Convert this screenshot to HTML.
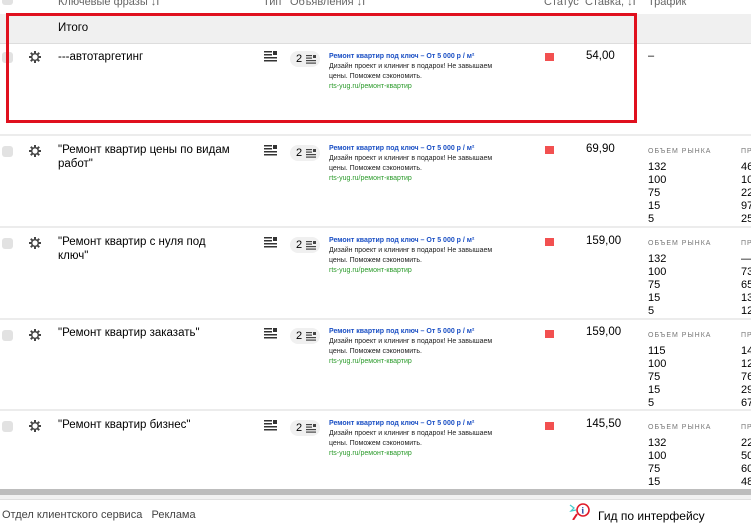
<!DOCTYPE html>
<html><head><meta charset="utf-8"><style>
*{margin:0;padding:0;box-sizing:border-box}
body{width:751px;height:519px;overflow:hidden;background:#fff;font-family:"Liberation Sans","DejaVu Sans",sans-serif;color:#000;position:relative}
.a{position:absolute;white-space:nowrap}
.hd{font-size:11px;color:#666;top:-4px}
.line{position:absolute;left:0;width:751px;height:2px;background:#ececec}
.cb{position:absolute;left:2px;width:11px;height:11px;border-radius:3px;background:#e2e2e2}
.gear{position:absolute;left:28px;width:14px;height:14px}
.ph{position:absolute;left:58px;font-size:11.5px;line-height:14px;width:180px;white-space:normal}
.ti{position:absolute;left:264px;width:13px;height:11px}
.bd{position:absolute;left:290px;width:30px;height:16px;border-radius:8px;background:#f0f0f0;font-size:11px;line-height:16px;padding-left:6px}
.bd svg{position:absolute;left:16px;top:4px}
.ad{position:absolute;left:329px;font-size:7px;line-height:10px;width:182px;white-space:normal;color:#222}
.ad b{color:#1a4fc4;font-weight:bold;display:block;white-space:nowrap}
.ad i{font-style:normal;color:#2a9a2a;display:block}
.st{position:absolute;left:545px;width:9px;height:8px;background:#f25050}
.bid{position:absolute;left:586px;font-size:11.5px}
.tr{position:absolute;left:648px;font-size:11px;line-height:13px}
.tr .h{font-size:7px;letter-spacing:1px;color:#777;margin-bottom:5px;line-height:9px}
.tr2{position:absolute;left:741px;font-size:11px;line-height:13px}
.tr2 .h{font-size:7px;letter-spacing:1px;color:#777;margin-bottom:5px;line-height:9px}
</style></head><body>
<div class="cb" style="top:-6px"></div>
<div class="a hd" style="left:58px">Ключевые фразы ↓I</div>
<div class="a hd" style="left:263px">Тип</div>
<div class="a hd" style="left:290px">Объявления ↓I</div>
<div class="a hd" style="left:544px">Статус</div>
<div class="a hd" style="left:585px">Ставка, ↓I</div>
<div class="a hd" style="left:648px">Трафик</div>

<div style="position:absolute;left:0;top:14px;width:751px;height:30px;background:#f0f0f0;border-bottom:1px solid #ddd"></div>
<div class="a" style="left:58px;top:22px;font-size:11.5px">Итого</div>

<svg width="0" height="0" style="position:absolute"><defs>
<g id="g"><g stroke="#444" stroke-width="2"><line x1="7" y1="1" x2="7" y2="13"/><line x1="1" y1="7" x2="13" y2="7"/><line x1="2.8" y1="2.8" x2="11.2" y2="11.2"/><line x1="11.2" y1="2.8" x2="2.8" y2="11.2"/></g><circle cx="7" cy="7" r="4" fill="#444"/><circle cx="7" cy="7" r="2.6" fill="#fff"/></g>
<g id="t" fill="#333"><rect x="0" y="0" width="8" height="1.5"/><rect x="9" y="0" width="4" height="4"/><rect x="0" y="3" width="8" height="1.5"/><rect x="0" y="6" width="13" height="1.5"/><rect x="0" y="9" width="13" height="1.5"/></g>
<g id="s" fill="#444"><rect x="0" y="0" width="6" height="1.2"/><rect x="7" y="0" width="3" height="3"/><rect x="0" y="2.5" width="6" height="1.2"/><rect x="0" y="5" width="10" height="1.2"/><rect x="0" y="7.5" width="10" height="1.2"/></g>
</defs></svg>

<!-- row 1 -->
<div class="cb" style="top:52px"></div>
<svg class="gear" style="top:50px" viewBox="0 0 14 14"><use href="#g"/></svg>
<div class="ph" style="top:50px">---автотаргетинг</div>
<svg class="ti" style="top:51px" viewBox="0 0 13 11"><use href="#t"/></svg>
<div class="bd" style="top:51px">2<svg width="10" height="9"><use href="#s"/></svg></div>
<div class="ad" style="top:52px"><b>Ремонт квартир под ключ – От 5 000 р / м²</b>Дизайн проект и клининг в подарок! Не завышаем цены. Поможем сэкономить.<i>rts-yug.ru/ремонт-квартир</i></div>
<div class="st" style="top:53px"></div>
<div class="bid" style="top:50px">54,00</div>
<div class="a" style="left:648px;top:50px;font-size:11px">–</div>
<div class="line" style="top:134px"></div>

<!-- row 2 -->
<div class="cb" style="top:146px"></div>
<svg class="gear" style="top:144px" viewBox="0 0 14 14"><use href="#g"/></svg>
<div class="ph" style="top:143px">"Ремонт квартир цены по видам работ"</div>
<svg class="ti" style="top:145px" viewBox="0 0 13 11"><use href="#t"/></svg>
<div class="bd" style="top:145px">2<svg width="10" height="9"><use href="#s"/></svg></div>
<div class="ad" style="top:144px"><b>Ремонт квартир под ключ – От 5 000 р / м²</b>Дизайн проект и клининг в подарок! Не завышаем цены. Поможем сэкономить.<i>rts-yug.ru/ремонт-квартир</i></div>
<div class="st" style="top:146px"></div>
<div class="bid" style="top:143px">69,90</div>
<div class="tr" style="top:147px"><div class="h">ОБЪЕМ РЫНКА</div>132<br>100<br>75<br>15<br>5</div>
<div class="tr2" style="top:147px"><div class="h">ПРОГНОЗ</div>46<br>10<br>22<br>97<br>25</div>
<div class="line" style="top:226px"></div>

<!-- row 3 -->
<div class="cb" style="top:238px"></div>
<svg class="gear" style="top:236px" viewBox="0 0 14 14"><use href="#g"/></svg>
<div class="ph" style="top:235px">"Ремонт квартир с нуля под ключ"</div>
<svg class="ti" style="top:237px" viewBox="0 0 13 11"><use href="#t"/></svg>
<div class="bd" style="top:237px">2<svg width="10" height="9"><use href="#s"/></svg></div>
<div class="ad" style="top:236px"><b>Ремонт квартир под ключ – От 5 000 р / м²</b>Дизайн проект и клининг в подарок! Не завышаем цены. Поможем сэкономить.<i>rts-yug.ru/ремонт-квартир</i></div>
<div class="st" style="top:238px"></div>
<div class="bid" style="top:235px">159,00</div>
<div class="tr" style="top:239px"><div class="h">ОБЪЕМ РЫНКА</div>132<br>100<br>75<br>15<br>5</div>
<div class="tr2" style="top:239px"><div class="h">ПРОГНОЗ</div>—<br>73<br>65<br>13<br>12</div>
<div class="line" style="top:318px"></div>

<!-- row 4 -->
<div class="cb" style="top:330px"></div>
<svg class="gear" style="top:328px" viewBox="0 0 14 14"><use href="#g"/></svg>
<div class="ph" style="top:326px">"Ремонт квартир заказать"</div>
<svg class="ti" style="top:328px" viewBox="0 0 13 11"><use href="#t"/></svg>
<div class="bd" style="top:328px">2<svg width="10" height="9"><use href="#s"/></svg></div>
<div class="ad" style="top:327px"><b>Ремонт квартир под ключ – От 5 000 р / м²</b>Дизайн проект и клининг в подарок! Не завышаем цены. Поможем сэкономить.<i>rts-yug.ru/ремонт-квартир</i></div>
<div class="st" style="top:330px"></div>
<div class="bid" style="top:326px">159,00</div>
<div class="tr" style="top:331px"><div class="h">ОБЪЕМ РЫНКА</div>115<br>100<br>75<br>15<br>5</div>
<div class="tr2" style="top:331px"><div class="h">ПРОГНОЗ</div>14<br>12<br>76<br>29<br>67</div>
<div class="line" style="top:409px"></div>

<!-- row 5 -->
<div class="cb" style="top:421px"></div>
<svg class="gear" style="top:419px" viewBox="0 0 14 14"><use href="#g"/></svg>
<div class="ph" style="top:418px">"Ремонт квартир бизнес"</div>
<svg class="ti" style="top:420px" viewBox="0 0 13 11"><use href="#t"/></svg>
<div class="bd" style="top:420px">2<svg width="10" height="9"><use href="#s"/></svg></div>
<div class="ad" style="top:419px"><b>Ремонт квартир под ключ – От 5 000 р / м²</b>Дизайн проект и клининг в подарок! Не завышаем цены. Поможем сэкономить.<i>rts-yug.ru/ремонт-квартир</i></div>
<div class="st" style="top:422px"></div>
<div class="bid" style="top:418px">145,50</div>
<div class="tr" style="top:423px"><div class="h">ОБЪЕМ РЫНКА</div>132<br>100<br>75<br>15</div>
<div class="tr2" style="top:423px"><div class="h">ПРОГНОЗ</div>22<br>50<br>60<br>48</div>

<div style="position:absolute;left:0;top:489px;width:751px;height:6px;background:#bdbdbd"></div>
<div style="position:absolute;left:0;top:495px;width:751px;height:4px;background:#f2f2f2"></div>
<div style="position:absolute;left:0;top:499px;width:751px;height:1px;background:#e0e0e0"></div>
<div class="a" style="left:2px;top:509px;font-size:11px;color:#444">Отдел клиентского сервиса&nbsp;&nbsp;&nbsp;Реклама</div>
<svg class="a" style="left:568px;top:502px" width="26" height="18" viewBox="0 0 26 18"><path d="M2 3l4 3-3 3 5-1" stroke="#4cc" fill="none" stroke-width="1.2"/><circle cx="15" cy="8" r="6" fill="#fff" stroke="#e01a2a" stroke-width="1.6"/><text x="13.5" y="11.5" font-size="9" font-weight="bold" fill="#1a3a9a" font-family="Liberation Serif">i</text><path d="M9 12l-4 6" stroke="#e01a2a" stroke-width="2"/></svg>
<div class="a" style="left:598px;top:509px;font-size:12px">Гид по интерфейсу</div>

<div style="position:absolute;left:6px;top:13px;width:631px;height:110px;border:3px solid #e0101e"></div>
</body></html>
